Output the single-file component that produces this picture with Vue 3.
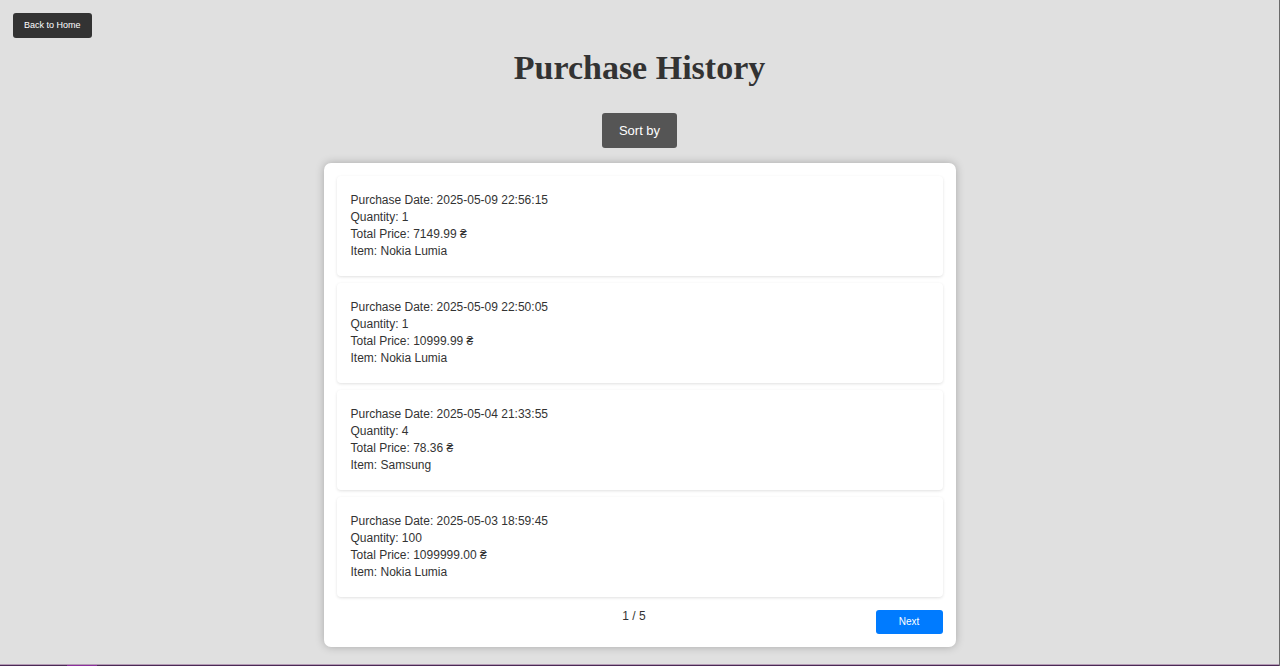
<script setup>
import { ref } from 'vue'

const purchases = ref([
  { date: '2025-05-09 22:56:15', quantity: 1, total: '7149.99', item: 'Nokia Lumia' },
  { date: '2025-05-09 22:50:05', quantity: 1, total: '10999.99', item: 'Nokia Lumia' },
  { date: '2025-05-04 21:33:55', quantity: 4, total: '78.36', item: 'Samsung' },
  { date: '2025-05-03 18:59:45', quantity: 100, total: '1099999.00', item: 'Nokia Lumia' },
])
const page = ref(1)
const pageCount = 5
</script>

<template>
  <div class="page">
    <button class="back" type="button">Back to Home</button>
    <main class="content">
      <h1 class="title">Purchase History</h1>
      <button class="sort" type="button">Sort by</button>
      <section class="panel">
        <ul class="list">
          <li v-for="p in purchases" :key="p.date" class="card">
            <p>Purchase Date: {{ p.date }}</p>
            <p>Quantity: {{ p.quantity }}</p>
            <p>Total Price: {{ p.total }} ₴</p>
            <p>Item: {{ p.item }}</p>
          </li>
        </ul>
        <nav class="pager">
          <span class="count">{{ page }} / {{ pageCount }}</span>
          <button class="next" type="button">Next</button>
        </nav>
      </section>
    </main>
    <div class="edge"><span class="edge-mark"></span></div>
  </div>
</template>

<style>
body {
  background: #e0e0e0;
}
</style>

<style scoped>
.page {
  position: relative;
  box-sizing: border-box;
  min-height: 100vh;
  padding: 13px 13px 19px;
  border-right: 1px solid #6a6a6a;
  background: #e0e0e0;
  color: #333;
  font-family: "Liberation Sans", Arial, sans-serif;
  font-size: 12px;
  line-height: 17px;
}
button {
  display: block;
  border: 0;
  border-radius: 3px;
  color: #fff;
  font-family: inherit;
  cursor: pointer;
}
.back {
  padding: 6px 11px;
  background: #333;
  font-size: 9px;
  line-height: 13px;
}
.content {
  display: flex;
  flex-direction: column;
  align-items: center;
}
.title {
  margin: 9px 0 25px;
  font-family: "Liberation Serif", "Times New Roman", serif;
  font-size: 34px;
  line-height: 41px;
}
.sort {
  margin-bottom: 15px;
  padding: 8px 17px;
  background: #555;
  font-size: 13px;
  line-height: 19px;
}
.panel {
  box-sizing: border-box;
  width: 100%;
  max-width: 632px;
  padding: 13px;
  border-radius: 7px;
  background: #fff;
  box-shadow: 0 0 8px rgba(0, 0, 0, 0.25);
}
.list {
  display: flex;
  flex-direction: column;
  gap: 7px;
  margin: 0;
  padding: 0;
  list-style: none;
}
.card {
  padding: 16px 14px;
  border-radius: 4px;
  background: #fff;
  box-shadow: 0 1px 3px rgba(0, 0, 0, 0.12);
}
.card p {
  margin: 0;
}
.pager {
  display: grid;
  grid-template-columns: 1fr auto 1fr;
  align-items: start;
  padding-top: 11px;
}
.count {
  grid-column: 2;
  padding-right: 11px;
}
.next {
  justify-self: end;
  width: 67px;
  margin-top: 2px;
  padding: 5px 0;
  background: #007bff;
  font-size: 10px;
  line-height: 14px;
}
.edge {
  position: absolute;
  right: 0;
  bottom: 0;
  left: 0;
  height: 1px;
  border-top: 1px solid #b39bb5;
  background: #4b2a55;
}
.edge-mark {
  display: block;
  width: 30px;
  height: 1px;
  margin-left: 67px;
  background: #8b2f9b;
}
</style>
